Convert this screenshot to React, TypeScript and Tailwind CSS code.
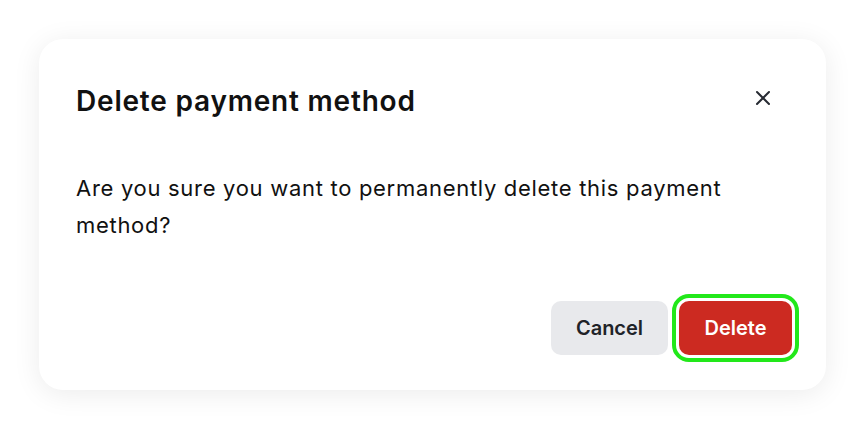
import { X } from "lucide-react";

export default function App() {
  return (
    <div className="flex h-[430px] w-[865px] items-start bg-white pl-[39px] pt-[39px] font-['Inter',sans-serif]">
      <div className="flex h-[351px] w-[787px] flex-col rounded-[24px] bg-white pl-[37px] pr-[34px] shadow-[0_4px_28px_rgba(0,0,0,0.08)]">
        <div className="flex items-start justify-between pt-[45px]">
          <h2 className="text-[28px] font-semibold leading-[34px] tracking-[0.8px] text-[#111]">
            Delete payment method
          </h2>
          <button type="button" aria-label="Close" className="mr-[17px] mt-[2px] text-[#272b33]">
            <X size={24} strokeWidth={2} />
          </button>
        </div>
        <p className="mt-[52px] text-[22px] leading-[37px] tracking-[0.7px] text-[#111]">
          Are you sure you want to permanently delete this payment method?
        </p>
        <div className="mt-auto mb-[35px] flex justify-end gap-[11px]">
          <button
            type="button"
            className="h-[54px] w-[117px] rounded-[10px] bg-[#e8e9ec] text-[20px] font-semibold text-[#1f2328]"
          >
            Cancel
          </button>
          <button
            type="button"
            className="h-[54px] w-[113px] rounded-[10px] bg-[#cc2a21] text-[20px] font-semibold text-white outline-[4px] outline-offset-[3px] outline-[#22e81a] outline-solid"
          >
            Delete
          </button>
        </div>
      </div>
    </div>
  );
}
